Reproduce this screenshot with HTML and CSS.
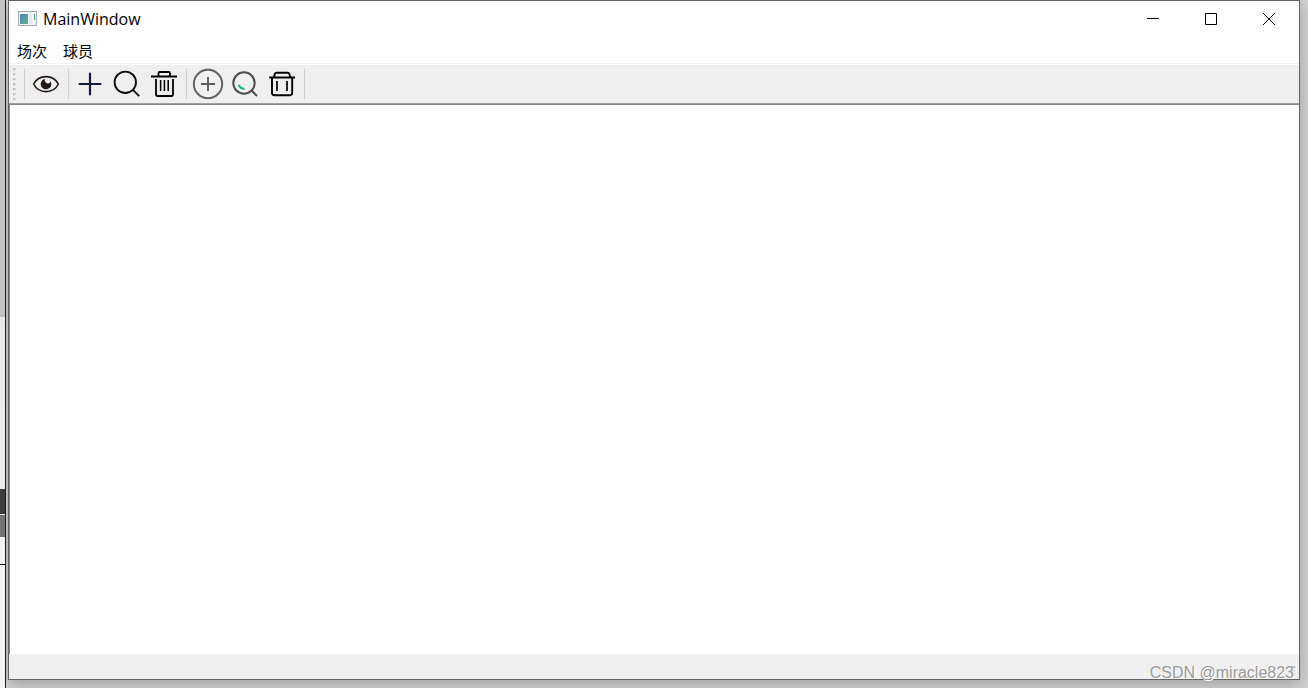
FILE: index.html
```html
<!doctype html>
<html lang="zh-cn">
<head>
<meta charset="UTF-8">
<title>MainWindow</title>
<link rel="stylesheet" href="styles.css">
</head>
<body>
<div class="desktop">
	<div class="behind"></div>
	<div class="window">
		<header class="titlebar">
			<svg class="app_icon" width="20" height="16" viewBox="0 0 20 16">
				<defs>
					<linearGradient id="app" x1="0" y1="0" x2="1" y2="1"><stop offset="0" stop-color="#4a7fb8"/><stop offset="1" stop-color="#5fb783"/></linearGradient>
				</defs>
				<rect x=".5" y=".5" width="18" height="14" fill="#f4f6f7" stroke="#a3abaf"/>
				<rect x="2" y="3" width="8" height="10" fill="url(#app)"/>
				<rect x="11" y="3" width="3" height="10" fill="#e3e8ea"/>
				<rect x="16" y="3" width="1" height="6" fill="#4f9a96"/>
			</svg>
			<h1>MainWindow</h1>
			<div class="win_ctrl">
				<button type="button" aria-label="最小化"><svg width="12" height="12" viewBox="0 0 12 12"><path d="M0 5.5h12"/></svg></button>
				<button type="button" aria-label="最大化"><svg width="12" height="12" viewBox="0 0 12 12"><path d="M.5.5h11v11H.5z"/></svg></button>
				<button type="button" aria-label="关闭"><svg width="12" height="12" viewBox="0 0 12 12"><path d="M0 0l12 12M12 0L0 12"/></svg></button>
			</div>
		</header>
		<nav class="menubar">
			<button type="button">场次</button>
			<button type="button">球员</button>
		</nav>
		<div class="toolbar" role="toolbar">
			<span class="handle"></span>
			<span class="sep"></span>
			<button type="button" aria-label="查看">
				<svg width="32" height="32" viewBox="0 0 32 32" stroke="#231815" stroke-width="1.600">
					<path d="M3.6 16C6 11.400 11 8.600 16 8.600S26 11.400 28.400 16C26 20.800 21 23.600 16 23.600S6 20.800 3.600 16z"/>
					<path d="M14.800 11C14.300 14 16.500 16 19 15.200C19.800 15 20.400 14.300 20.800 13.600C22.500 18 19.800 21.300 16 21.300C12.800 21.300 10.700 18.800 10.700 16C10.700 13.500 12.500 11.200 14.800 11z" fill="#231815" stroke="none"/>
				</svg>
			</button>
			<span class="sep"></span>
			<button type="button" aria-label="添加场次">
				<svg width="32" height="32" viewBox="0 0 32 32" stroke="#141b3c" stroke-width="2.200" stroke-linecap="round"><path d="M16 5.500v21M5.500 16h21"/></svg>
			</button>
			<button type="button" aria-label="查找场次">
				<svg width="32" height="32" viewBox="0 0 32 32" stroke="#111" stroke-width="1.900"><circle cx="14.300" cy="14.300" r="10.700"/><path d="M21.900 21.900l6.300 6.300"/></svg>
			</button>
			<button type="button" aria-label="删除场次">
				<svg width="32" height="32" viewBox="0 0 32 32" stroke="#000" stroke-width="1.800"><path d="M3 8.500h26M10.500 8V5.300Q10.500 4 11.800 4h8.800Q22 4 22 5.300V8M8 11v15.300Q8 28 9.700 28h13.600Q25 28 25 26.300V11"/><path d="M12.600 12v11M16.400 12v11M20.200 12v11" stroke-width="1.500"/></svg>
			</button>
			<span class="sep"></span>
			<button type="button" aria-label="添加球员">
				<svg width="32" height="32" viewBox="0 0 32 32" stroke="#606060" stroke-width="1.900"><circle cx="16" cy="16" r="14.200"/><path d="M16 9v14M9 16h14"/></svg>
			</button>
			<button type="button" aria-label="查找球员">
				<svg width="32" height="32" viewBox="0 0 32 32" stroke="#4d4d4d" stroke-width="2"><circle cx="15" cy="15" r="10.700"/><path d="M22.500 22.500l5.500 5.500"/><path d="M9.500 17Q11.500 20.600 15.500 21" stroke="#16b58b"/></svg>
			</button>
			<button type="button" aria-label="删除球员">
				<svg width="32" height="32" viewBox="0 0 32 32" stroke="#000" stroke-width="1.900"><path d="M3.300 9.500h25.700M8 9l.8-3Q9.200 4.800 10.500 4.800h11.300Q23 4.800 23.400 6l.8 3M6 10v14.800Q6 27.300 8.500 27.300h15Q26.200 27.300 26.200 24.800V10"/><path d="M11 13v10M21 13v10" stroke-width="1.700"/></svg>
			</button>
			<span class="sep"></span>
		</div>
		<main class="view"></main>
		<footer class="statusbar">
			<svg class="grip" width="4" height="11" viewBox="0 0 4 11"><path d="M0 9h3M0 5h3M0 1h3" stroke="#bfbfbf" stroke-width="2"/></svg>
		</footer>
	</div>
	<div class="watermark">CSDN @miracle823</div>
</div>
</body>
</html>
```
FILE: styles.css
```css
html,body {height: 100%;}
body {margin: 0;font-family: "Open Sans","Noto Sans CJK SC",sans-serif;color: #000;}
button {margin: 0;padding: 0;border: 0 none;background: none;font: inherit;color: inherit;}
button:hover {background-color: #e5f1fb;}
svg {display: block;fill: none;}

.desktop {position: relative;display: flex;box-sizing: border-box;height: 100%;padding: 0 8px 8px 0;overflow: hidden;background-color: #d2d2d2;}

/* 后面露出来的另一个窗口 */
.behind {z-index: 1;flex: none;width: 5px;margin: 0 2px -8px 0;border-right: 1px solid #1c1c1c;background: linear-gradient(#c3c3c3 317px,#e8e8e8 317px,#eee 489px,#3c3c3c 489px,#3c3c3c 514px,#eee 514px,#eee 515px,#747474 515px,#747474 537px,#f2f2f2 537px,#f2f2f2 564px,#000 564px,#000 565px,#f2f2f2 565px);}

/* 主窗口 */
.window {display: flex;flex: 1;flex-direction: column;min-width: 0;border: 1px solid #646464;background-color: #fff;box-shadow: 0 4px 14px rgba(0,0,0,.25);}

.titlebar {display: flex;align-items: center;height: 36px;padding: 0 1px 1px 9px;}
.titlebar h1 {flex: 1;margin: 0 0 0 5px;font-size: 16px;font-weight: 400;line-height: 24px;}
.win_ctrl {display: flex;height: 100%;}
.win_ctrl button {display: flex;align-items: center;justify-content: center;width: 58px;}
.win_ctrl svg {stroke: #000;stroke-width: 1;}

.menubar {display: flex;height: 25px;border-bottom: 1px solid #f0f0f0;}
.menubar button {padding: 0 8px;font-size: 15px;line-height: 24px;}

.toolbar {display: flex;align-items: center;height: 38px;margin-top: 1px;border-bottom: 1px solid #a0a0a0;background-color: #efefef;}
.toolbar button {display: flex;align-items: center;box-sizing: border-box;width: 37px;height: 36px;padding-left: 2px;}
.handle {width: 3px;height: 32px;margin: 0 5px 0 4px;background: radial-gradient(circle at 1px 1px,#c4c4c4 1px,transparent 2px) 0 0/3px 5px;}
.sep {width: 1px;height: 30px;margin: 0 3px;background-color: #d0d0d0;}

.view {flex: 1;border-top: 1px solid #828790;border-left: 1px solid #828790;}

.statusbar {display: flex;align-items: flex-end;justify-content: flex-end;height: 25px;background-color: #f0f0f0;}
.grip {margin: 0 3px 2px 0;}

/* 右下角水印 */
.watermark {position: absolute;right: 14px;bottom: 5px;font: 16px/20px "Liberation Sans",sans-serif;color: #999;text-shadow: 1px 1px 0 #fff;}
```
